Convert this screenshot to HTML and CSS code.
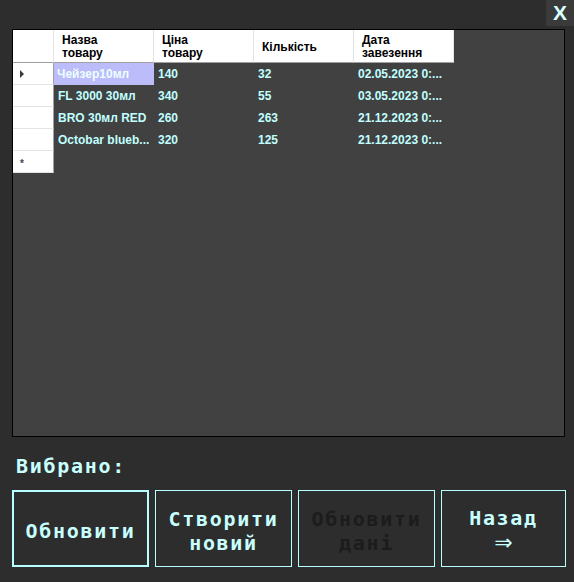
FILE: index.html
```html
<!DOCTYPE html>
<html lang="uk">
<head>
<meta charset="utf-8">
<title>Товари</title>
<link rel="stylesheet" href="styles.css">
</head>
<body>
<div class="window">
  <div class="topbar">
    <div class="close">X</div>
  </div>
  <div class="grid">
    <div class="table">
      <div class="row head">
        <div class="rh"></div>
        <div class="hc">Назва<br>товару</div>
        <div class="hc">Ціна<br>товару</div>
        <div class="hc single">Кількість</div>
        <div class="hc">Дата<br>завезення</div>
      </div>
      <div class="row">
        <div class="rh"><span class="tri"></span></div>
        <div class="c sel">Чейзер10мл</div>
        <div class="c">140</div>
        <div class="c">32</div>
        <div class="c">02.05.2023 0:...</div>
      </div>
      <div class="row">
        <div class="rh"></div>
        <div class="c">FL 3000 30мл</div>
        <div class="c">340</div>
        <div class="c">55</div>
        <div class="c">03.05.2023 0:...</div>
      </div>
      <div class="row">
        <div class="rh"></div>
        <div class="c">BRO 30мл RED</div>
        <div class="c">260</div>
        <div class="c">263</div>
        <div class="c">21.12.2023 0:...</div>
      </div>
      <div class="row">
        <div class="rh"></div>
        <div class="c">Octobar blueb...</div>
        <div class="c">320</div>
        <div class="c">125</div>
        <div class="c">21.12.2023 0:...</div>
      </div>
      <div class="row">
        <div class="rh"><span class="star">*</span></div>
      </div>
    </div>
  </div>
  <div class="label">Вибрано:</div>
  <div class="buttons">
    <div class="btn focus">Обновити</div>
    <div class="btn">Створити<br>новий</div>
    <div class="btn disabled">Обновити<br>дані</div>
    <div class="btn narrow"><span>Назад</span><span class="arrow">⇒</span></div>
  </div>
</div>
</body>
</html>
```
FILE: styles.css
```css
html, body {
  margin: 0;
  padding: 0;
  background: #2d2d2d;
}
.window {
  width: 574px;
  height: 582px;
  background: #2d2d2d;
  display: flex;
  flex-direction: column;
}
.topbar {
  height: 29px;
  display: flex;
  justify-content: flex-end;
}
.close {
  width: 28px;
  height: 26px;
  background: #3a3a3a;
  color: #d8ffff;
  font-family: "Liberation Sans", Arial, sans-serif;
  font-weight: bold;
  font-size: 21px;
  line-height: 26px;
  text-align: center;
}
.grid {
  margin-left: 12px;
  width: 551px;
  height: 406px;
  border: 1px solid #000;
  background: #414141;
  overflow: hidden;
}
.table {
  display: flex;
  flex-direction: column;
  font-family: "Liberation Sans", Arial, sans-serif;
  font-weight: bold;
  font-size: 12px;
}
.row {
  display: flex;
  height: 22px;
}
.row.head {
  height: 33px;
}
.rh {
  width: 41px;
  height: 22px;
  box-sizing: border-box;
  background: #fff;
  border-right: 1px solid #a0a0a0;
  border-bottom: 1px solid #e3e3e3;
  display: flex;
  align-items: center;
  padding-left: 7px;
}
.head .rh {
  height: 33px;
  border-right: 1px solid #e3e3e3;
  border-bottom: 1px solid #a0a0a0;
}
.hc {
  width: 100px;
  height: 33px;
  box-sizing: border-box;
  background: #fff;
  color: #000;
  border-right: 1px solid #e3e3e3;
  border-bottom: 1px solid #a0a0a0;
  padding: 4px 0 0 8px;
  line-height: 13px;
}
.hc.single {
  padding-top: 11px;
}
.c {
  width: 100px;
  height: 22px;
  box-sizing: border-box;
  padding-left: 4px;
  color: #c0ffff;
  line-height: 22px;
  white-space: nowrap;
  overflow: hidden;
}
.c.sel {
  padding-left: 3px;
  background: #bcbcfb;
  color: #ecffff;
}
.tri {
  width: 0;
  height: 0;
  border-top: 4px solid transparent;
  border-bottom: 4px solid transparent;
  border-left: 4px solid #3c3c3c;
}
.star {
  color: #444;
  font-size: 10px;
  line-height: 10px;
  margin-top: 4px;
}
.label {
  margin: 19px 0 0 16px;
  height: 20px;
  font-family: "DejaVu Sans Mono", monospace;
  font-weight: bold;
  font-size: 20px;
  letter-spacing: 1.7px;
  color: #c8ffff;
  line-height: 20px;
}
.buttons {
  margin: 14px 0 0 12px;
  display: flex;
  gap: 6px;
}
.btn {
  width: 137px;
  height: 77px;
  box-sizing: border-box;
  border: 1px solid #b8ffff;
  display: flex;
  flex-direction: column;
  align-items: center;
  justify-content: center;
  text-align: center;
  font-family: "DejaVu Sans Mono", monospace;
  font-weight: bold;
  font-size: 20px;
  letter-spacing: 1.7px;
  line-height: 24px;
  color: #c8ffff;
  padding-top: 4px;
}
.btn.focus {
  border-width: 2px;
}
.btn.disabled {
  color: #1c1c1c;
}
.btn.narrow {
  width: 125px;
}
.arrow {
  font-family: "DejaVu Sans", sans-serif;
  font-weight: normal;
  font-size: 22px;
  letter-spacing: 0;
  line-height: 26px;
}
```
